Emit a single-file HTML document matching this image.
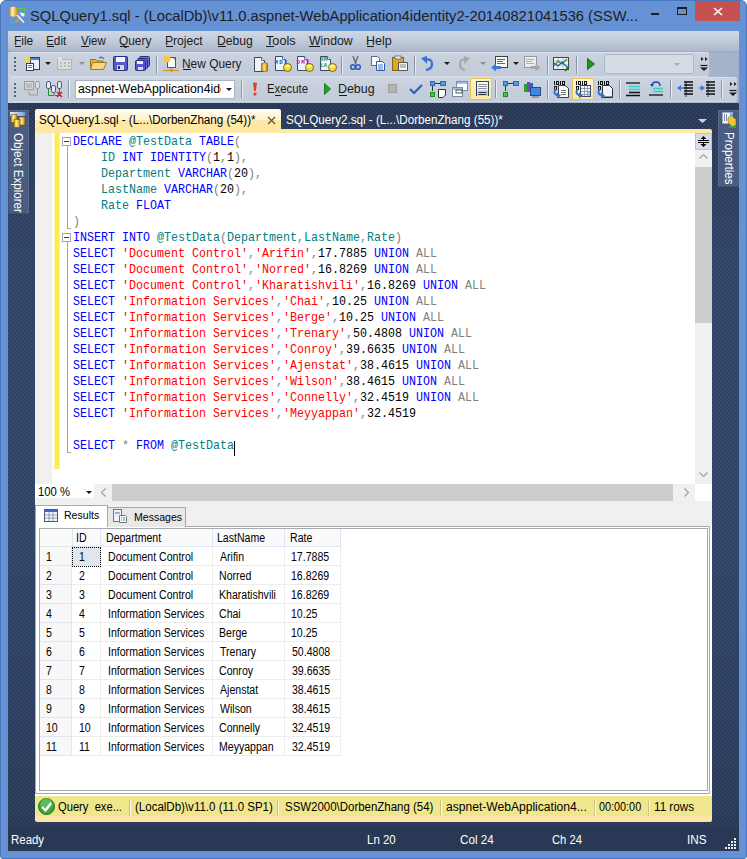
<!DOCTYPE html><html><head><meta charset="utf-8"><style>
*{margin:0;padding:0;box-sizing:border-box}
html,body{width:747px;height:859px;overflow:hidden;background:#fff}
body{position:relative;font-family:"Liberation Sans",sans-serif;font-size:12px;color:#000}
.a{position:absolute}
.t{position:absolute;white-space:pre;line-height:1;transform-origin:0 0}
svg{position:absolute;overflow:visible}
#frame{left:0;top:0;width:747px;height:859px;background:#6591d5;border-radius:6px 6px 3px 3px;border:1px solid #4a76bd}
.dots{background-color:#33476a;
 background-image:conic-gradient(from 270deg at 1px 1px,#24324c 90deg,transparent 0),conic-gradient(from 270deg at 1px 1px,#24324c 90deg,transparent 0),
 conic-gradient(from 270deg at 1px 1px,#3c5073 90deg,transparent 0),conic-gradient(from 270deg at 1px 1px,#3c5073 90deg,transparent 0),
 linear-gradient(#283753 0px,#2c3d5c 30px,#33476a 150px,#34496b 420px,#2f4263 600px,#2a3a58 724px);
 background-size:4px 4px,4px 4px,4px 4px,4px 4px,100% 100%;background-position:0 0,2px 2px,2px 0,0 2px,0 0}
.tb{position:absolute;border-radius:3px;background:linear-gradient(#ccd4e1,#c6cedc 50%,#c3ccda);box-shadow:inset 0 1px #d9e0ea,0 1px #d3dae6}
.grip{position:absolute;width:2px;height:2px;background:#56637a;box-shadow:0 4px #56637a,0 8px #56637a,0 12px #56637a}
.sep{position:absolute;width:1px;background:#8a95a8;box-shadow:1px 0 #e9edf3}
.code{font-family:"Liberation Mono",monospace;font-size:13px;line-height:16px;white-space:pre;position:absolute;left:73px;color:#000;transform:scaleX(0.89734);transform-origin:0 0}
.k{color:#0000ff}.s{color:#ff0000}.i{color:#008080}.g{color:#808080}
</style></head><body>
<div id="frame" class="a"></div>
<svg style="left:6px;top:4px" width="24" height="24" viewBox="0 0 24 24"><defs><linearGradient id="gdb" x1="0" x2="1"><stop offset="0" stop-color="#e0a92a"/><stop offset="0.35" stop-color="#fff0b0"/><stop offset="1" stop-color="#d89510"/></linearGradient></defs><g fill="#4fd64f"><rect x="12" y="4" width="1.2" height="1.2"/><rect x="14" y="4" width="1.2" height="1.2"/><rect x="16" y="4" width="1.2" height="1.2"/><rect x="18" y="4" width="1.2" height="1.2"/><rect x="18" y="6" width="1.2" height="1.2"/><rect x="18" y="8" width="1.2" height="1.2"/><rect x="5" y="14" width="1.2" height="1.2"/><rect x="5" y="16" width="1.2" height="1.2"/><rect x="5" y="18" width="1.2" height="1.2"/><rect x="7" y="18" width="1.2" height="1.2"/></g><path d="M4 3.5Q7.5 2 11 3.5V12Q7.5 13.5 4 12Z" fill="url(#gdb)"/><path d="M9.5 18.5L15 13" stroke="#e3a11c" stroke-width="1.6"/><path d="M11 11L18 18.5" stroke="#f2f4f8" stroke-width="1.5"/><path d="M13 9Q16 7.5 19 10.5L17.5 13Z" fill="#dfe3ea"/><circle cx="16.5" cy="10.5" r="1.5" fill="#fff"/></svg>
<div class="t" style="left:30.28px;top:7.85px;font-size:15.3px;color:#1e1e1e;transform:scaleX(0.9619);">SQLQuery1.sql - (LocalDb)\v11.0.aspnet-WebApplication4identity2-20140821041536 (SSW...</div>
<div class="a" style="left:651px;top:13px;width:8px;height:2px;background:#1e1e1e"></div>
<div class="a" style="left:677px;top:7px;width:10px;height:8px;border:1px solid #1e1e1e;border-top-width:2px"></div>
<div class="a" style="left:695px;top:1px;width:45px;height:20px;background:#c75050"></div>
<svg style="left:713px;top:7px" width="10" height="9" viewBox="0 0 10 9"><path d="M1 1L9 8M9 1L1 8" stroke="#fff" stroke-width="1.6"/></svg>
<div class="a" style="left:8px;top:31px;width:731px;height:72px;background:linear-gradient(90deg,#c8d0de,#b4c0d3 60%,#a3b2ca)"></div>
<div class="a" style="left:8px;top:31px;width:731px;height:21px;background:linear-gradient(#d1d8e5,#bfc9d9 50%,#adb9cc 95%,#9eabc1 95%)"></div>
<div class="t" style="left:14.23px;top:34.59px;font-size:12.3px;color:#1b1b1b;transform:scaleX(0.9699);">File</div>
<div class="a" style="left:15px;top:46px;width:6px;height:1px;background:#1b1b1b"></div>
<div class="t" style="left:46.34px;top:34.59px;font-size:12.3px;color:#1b1b1b;transform:scaleX(0.9590);">Edit</div>
<div class="a" style="left:47px;top:46px;width:7px;height:1px;background:#1b1b1b"></div>
<div class="t" style="left:80.88px;top:34.59px;font-size:12.3px;color:#1b1b1b;transform:scaleX(0.9333);">View</div>
<div class="a" style="left:81px;top:46px;width:8px;height:1px;background:#1b1b1b"></div>
<div class="t" style="left:119.40px;top:34.59px;font-size:12.3px;color:#1b1b1b;transform:scaleX(0.9673);">Query</div>
<div class="a" style="left:120px;top:46px;width:9px;height:1px;background:#1b1b1b"></div>
<div class="t" style="left:165.31px;top:34.59px;font-size:12.3px;color:#1b1b1b;transform:scaleX(0.9852);">Project</div>
<div class="a" style="left:166px;top:46px;width:7px;height:1px;background:#1b1b1b"></div>
<div class="t" style="left:216.51px;top:34.59px;font-size:12.3px;color:#1b1b1b;transform:scaleX(0.9891);">Debug</div>
<div class="a" style="left:218px;top:46px;width:8px;height:1px;background:#1b1b1b"></div>
<div class="t" style="left:265.94px;top:34.59px;font-size:12.3px;color:#1b1b1b;transform:scaleX(1.0321);">Tools</div>
<div class="a" style="left:266px;top:46px;width:8px;height:1px;background:#1b1b1b"></div>
<div class="t" style="left:309.00px;top:34.59px;font-size:12.3px;color:#1b1b1b;">Window</div>
<div class="a" style="left:309px;top:46px;width:11px;height:1px;background:#1b1b1b"></div>
<div class="t" style="left:366.39px;top:34.59px;font-size:12.3px;color:#1b1b1b;transform:scaleX(1.0147);">Help</div>
<div class="a" style="left:367px;top:46px;width:7px;height:1px;background:#1b1b1b"></div>
<div class="tb" style="left:10px;top:52px;width:699px;height:24px"></div>
<div class="tb" style="left:10px;top:77px;width:727px;height:24px"></div>
<div class="grip" style="left:14px;top:57px"></div>
<div class="grip" style="left:14px;top:83px"></div>
<svg style="left:24px;top:56px" width="16" height="16" viewBox="0 0 16 16"><rect x="6.5" y="1.5" width="9" height="12" fill="#e9eef8" stroke="#2a3f6a"/><rect x="7" y="2" width="8" height="2" fill="#4a86d8"/><rect x="2.5" y="7.5" width="7" height="7" fill="#fff" stroke="#2a3f6a"/><path d="M4 9.5h4M4 11.5h4" stroke="#3b73c9"/><circle cx="3.5" cy="3.5" r="3" fill="#f5d547"/></svg>
<svg style="left:45px;top:62px" width="6" height="4" viewBox="0 0 6 4"><path d="M0 0H6L3 3Z" fill="#1b1b1b"/></svg>
<svg style="left:57px;top:57px" width="16" height="14" viewBox="0 0 16 14"><rect x="0.5" y="2.5" width="14" height="10" fill="#dcdcdc" stroke="#b5b5b5"/><path d="M3 6h2M7 6h2M11 6h2M3 9h2M7 9h2M11 9h2" stroke="#9a9a9a"/><circle cx="3" cy="2" r="2" fill="#e6e6e6"/></svg>
<svg style="left:79px;top:62px" width="6" height="4" viewBox="0 0 6 4"><path d="M0 0H6L3 3Z" fill="#8d8d8d"/></svg>
<svg style="left:90px;top:56px" width="17" height="15" viewBox="0 0 17 15"><path d="M0.5 3.5h5l1.5 1.5h6v8h-12.5z" fill="#e2b441" stroke="#9c7416"/><path d="M2.5 6.5h14l-3 7h-13z" fill="#f6d77a" stroke="#a47c1c"/><path d="M9 2Q12 0 14 3" stroke="#3a78c8" fill="none" stroke-width="1.3"/></svg>
<svg style="left:113px;top:56px" width="15" height="15" viewBox="0 0 15 15"><rect x="0.5" y="0.5" width="14" height="14" rx="1" fill="#5659c9" stroke="#2c2f86"/><rect x="3" y="1" width="9" height="5" fill="#f2f4ff"/><rect x="4" y="9" width="7" height="5" fill="#d8dbe6"/><rect x="5" y="10" width="2" height="3" fill="#333"/></svg>
<svg style="left:135px;top:56px" width="15" height="15" viewBox="0 0 15 15"><rect x="4.5" y="0.5" width="10" height="10" rx="1" fill="#6b6fd0" stroke="#2c2f86"/><rect x="2.5" y="2.5" width="10" height="10" rx="1" fill="#6164cc" stroke="#2c2f86"/><rect x="0.5" y="4.5" width="10" height="10" rx="1" fill="#5659c9" stroke="#2c2f86"/><rect x="2" y="5" width="6" height="3" fill="#eef"/><rect x="3" y="11" width="5" height="3" fill="#d8dbe6"/></svg>
<div class="sep" style="left:156px;top:56px;height:18px"></div>
<svg style="left:162px;top:55px" width="18" height="18" viewBox="0 0 18 18"><rect x="5.5" y="2.5" width="8" height="10" fill="#fff" stroke="#555"/><path d="M11 2.5l2.5 2.5" stroke="#555"/><circle cx="5" cy="4" r="3.5" fill="#f7c93a"/><path d="M1 15.5h16" stroke="#d69c1a" stroke-width="1.2"/><path d="M9.5 12.5v3" stroke="#d69c1a" stroke-width="1.2"/><circle cx="9.5" cy="15.5" r="1.2" fill="#c88a10"/></svg>
<div class="t" style="left:182.33px;top:57.59px;font-size:12.3px;color:#1b1b1b;transform:scaleX(0.9686);">New Query</div>
<div class="a" style="left:183px;top:69px;width:8px;height:1px;background:#1b1b1b"></div>
<svg style="left:254px;top:57px" width="15" height="16" viewBox="0 0 15 16"><path d="M0.5 0.5h7l3 3v11h-10z" fill="#eef2fa" stroke="#3c4a66"/><path d="M7.5 0.5v3h3" fill="#fff" stroke="#3c4a66" stroke-width="0.8"/><defs><linearGradient id="gcy" x1="0" x2="1"><stop offset="0" stop-color="#c88a10"/><stop offset="0.45" stop-color="#ffe27a"/><stop offset="1" stop-color="#c07a08"/></linearGradient></defs><path d="M7.5 6.5Q10.5 5 13.5 6.5V14Q10.5 15.5 7.5 14Z" fill="url(#gcy)" stroke="#6a5010" stroke-width="0.6"/></svg>
<svg style="left:275px;top:56px" width="17" height="16" viewBox="0 0 17 16"><path d="M0.5 0.5h7l3 3v11h-10z" fill="#eef2fa" stroke="#3c4a66"/><path d="M7.5 0.5v3h3" fill="#fff" stroke="#3c4a66" stroke-width="0.8"/><text x="-0.5" y="8" font-family="Liberation Mono" font-size="5.8" font-weight="bold" fill="#2060c0" textLength="13">MDX</text><circle cx="12.5" cy="11.5" r="4" fill="#f7dc2a" stroke="#4a3a08" stroke-width="0.7"/><ellipse cx="12.5" cy="10" rx="3" ry="1.2" fill="#fff39a"/></svg>
<svg style="left:297px;top:56px" width="17" height="16" viewBox="0 0 17 16"><path d="M0.5 0.5h7l3 3v11h-10z" fill="#eef2fa" stroke="#3c4a66"/><path d="M7.5 0.5v3h3" fill="#fff" stroke="#3c4a66" stroke-width="0.8"/><text x="-0.5" y="8" font-family="Liberation Mono" font-size="5.8" font-weight="bold" fill="#c020b0" textLength="13">DMX</text><circle cx="12.5" cy="11.5" r="4" fill="#f7dc2a" stroke="#4a3a08" stroke-width="0.7"/><ellipse cx="12.5" cy="10" rx="3" ry="1.2" fill="#fff39a"/></svg>
<svg style="left:320px;top:56px" width="17" height="16" viewBox="0 0 17 16"><path d="M0.5 0.5h7l3 3v11h-10z" fill="#eef2fa" stroke="#3c4a66"/><path d="M7.5 0.5v3h3" fill="#fff" stroke="#3c4a66" stroke-width="0.8"/><g fill="#20a050" font-family="Liberation Mono" font-size="5.6" font-weight="bold"><text x="0.5" y="5">XM</text><text x="0.5" y="11">LA</text></g><circle cx="12.5" cy="11.5" r="4" fill="#f7dc2a" stroke="#4a3a08" stroke-width="0.7"/><ellipse cx="12.5" cy="10" rx="3" ry="1.2" fill="#fff39a"/></svg>
<div class="sep" style="left:341px;top:56px;height:18px"></div>
<svg style="left:350px;top:55px" width="11" height="17" viewBox="0 0 11 17"><path d="M3 1L6 9M8 1L5 9" stroke="#6b6b6b" stroke-width="1.4"/><circle cx="3" cy="12" r="2.3" fill="none" stroke="#2c5fb8" stroke-width="1.6"/><circle cx="8" cy="12" r="2.3" fill="none" stroke="#2c5fb8" stroke-width="1.6"/></svg>
<svg style="left:371px;top:56px" width="15" height="15" viewBox="0 0 15 15"><path d="M0.5 0.5h6l2 2v7h-8z" fill="#fff" stroke="#4c6ea8"/><path d="M5.5 5.5h6l2 2v7h-8z" fill="#fff" stroke="#2f5aa8"/><path d="M7 9h5M7 11h5M7 13h5" stroke="#3f78d0"/></svg>
<svg style="left:392px;top:55px" width="17" height="17" viewBox="0 0 17 17"><rect x="0.5" y="2.5" width="11" height="13" fill="#e0a92c" stroke="#8b6310"/><rect x="3" y="1" width="6" height="3" fill="#f0f0f0" stroke="#666" stroke-width="0.8"/><path d="M6.5 7.5h9v8h-9z" fill="#f4f4f4" stroke="#555"/><path d="M8 10h6M8 12h6" stroke="#888"/></svg>
<div class="sep" style="left:414px;top:56px;height:18px"></div>
<svg style="left:421px;top:56px" width="14" height="15" viewBox="0 0 14 15"><path d="M4 4Q11 2 11 8Q11 13 5 14" fill="none" stroke="#3c74d2" stroke-width="2.4"/><path d="M0 2L6 0L6 8Z" fill="#3c74d2"/></svg>
<svg style="left:444px;top:62px" width="6" height="4" viewBox="0 0 6 4"><path d="M0 0H6L3 3Z" fill="#1b1b1b"/></svg>
<svg style="left:457px;top:56px" width="13" height="15" viewBox="0 0 13 15"><path d="M10 4Q3 2 3 8Q3 13 8 14" fill="none" stroke="#a8a8a8" stroke-width="2.2"/><path d="M13 2L7 0L7 8Z" fill="#a8a8a8"/></svg>
<svg style="left:480px;top:62px" width="6" height="4" viewBox="0 0 6 4"><path d="M0 0H6L3 3Z" fill="#8d8d8d"/></svg>
<svg style="left:491px;top:56px" width="17" height="15" viewBox="0 0 17 15"><rect x="4.5" y="0.5" width="12" height="11" fill="#fbfbfb" stroke="#444"/><path d="M6 3.5h8M6 5.5h6M6 7.5h8" stroke="#2f6cd0"/><path d="M0 11.5L5 7.5V10H10V13H5V15.5Z" fill="#3b7ad8"/></svg>
<svg style="left:513px;top:62px" width="6" height="4" viewBox="0 0 6 4"><path d="M0 0H6L3 3Z" fill="#1b1b1b"/></svg>
<svg style="left:524px;top:56px" width="17" height="15" viewBox="0 0 17 15"><rect x="0.5" y="0.5" width="12" height="11" fill="#ececec" stroke="#9a9a9a"/><path d="M2 3.5h8M2 5.5h6M2 7.5h8" stroke="#b0b0b0"/><path d="M16.5 11.5L11.5 7.5V10H6.5V13H11.5V15.5Z" fill="#a8a8a8"/></svg>
<div class="sep" style="left:547px;top:56px;height:18px"></div>
<svg style="left:553px;top:56px" width="17" height="16" viewBox="0 0 17 16"><rect x="0.5" y="1.5" width="15" height="12" fill="#f5f5f5" stroke="#444"/><path d="M1 5H15M1 9H15M5 2V13M10 2V13" stroke="#8aa" stroke-width="0.6"/><path d="M1 10L5 5L9 8L14 3" stroke="#2a8a2a" stroke-width="1.2" fill="none"/><path d="M1 7L5 10L9 6L14 11" stroke="#2a5ac0" stroke-width="1.2" fill="none"/><path d="M12 15L16 10" stroke="#1b7a1b" stroke-width="2"/></svg>
<div class="sep" style="left:576px;top:56px;height:18px"></div>
<svg style="left:587px;top:58px" width="8" height="12" viewBox="0 0 8 12"><path d="M0.5 0.5L7.5 6L0.5 11.5Z" fill="#1f9a1f" stroke="#157015"/></svg>
<div class="a" style="left:604px;top:54px;width:90px;height:20px;background:#d5dce6;border:1px solid #aeb8c8;border-radius:2px"></div>
<svg style="left:674px;top:63px" width="6" height="4" viewBox="0 0 6 4"><path d="M0 0H6L3 3Z" fill="#a6adb9"/></svg>
<svg style="left:700px;top:56px" width="9" height="17" viewBox="0 0 9 17"><path d="M1 1L3.5 3L1 5ZM5 1L7.5 3L5 5Z" fill="#1b1b1b"/><path d="M0.5 9.5H7.5" stroke="#1b1b1b" stroke-width="1.2"/><path d="M0 11.5H8L4 15Z" fill="#1b1b1b"/></svg>
<svg style="left:24px;top:81px" width="17" height="16" viewBox="0 0 17 16"><rect x="0.5" y="0.5" width="9" height="8" fill="#d8d8d8" stroke="#9c9c9c"/><rect x="2" y="2" width="6" height="5" fill="#bdbdbd"/><rect x="0" y="9" width="11" height="2" fill="#c8c8c8"/><rect x="11.5" y="0.5" width="4" height="7" rx="1.5" fill="#e0e0e0" stroke="#a0a0a0"/><path d="M5 11V14H13.5V8" stroke="#999" fill="none"/></svg>
<svg style="left:46px;top:81px" width="17" height="16" viewBox="0 0 17 16"><rect x="0.5" y="0.5" width="4" height="7" rx="1.5" fill="#e9eef6" stroke="#4e5c74"/><rect x="5.5" y="4.5" width="4" height="7" rx="1.5" fill="#e9eef6" stroke="#4e5c74"/><rect x="11.5" y="0.5" width="4" height="7" rx="1.5" fill="#e9eef6" stroke="#4e5c74"/><path d="M2.5 8V14.5H8V12" stroke="#1d9a1d" fill="none"/><path d="M9 14.5H12M13.5 8V15" stroke="#e21a1a"/><path d="M11 11L16 16M16 11L11 16" stroke="#e21a1a" stroke-width="1.5"/></svg>
<div class="sep" style="left:68px;top:80px;height:18px"></div>
<div class="a" style="left:75px;top:80px;width:160px;height:19px;background:#fff;border:1px solid #a9b3c3"></div>
<div class="a" style="left:76px;top:81px;width:146px;height:17px;overflow:hidden">
<div class="t" style="left:2.01px;top:1.92px;font-size:12.5px;color:#000;transform:scaleX(0.9792);">aspnet-WebApplication4identity2</div>
</div>
<div class="a" style="left:221px;top:81px;width:13px;height:17px;background:#fff"></div>
<svg style="left:226px;top:88px" width="6" height="4" viewBox="0 0 6 4"><path d="M0 0H6L3 3Z" fill="#1b1b1b"/></svg>
<div class="sep" style="left:241px;top:80px;height:18px"></div>
<svg style="left:252px;top:82px" width="6" height="14" viewBox="0 0 6 14"><path d="M1 1Q3 0 5 1L3.8 9H2.2Z" fill="#e2401c"/><circle cx="3" cy="12" r="1.6" fill="#e2401c"/></svg>
<div class="t" style="left:267.48px;top:82.59px;font-size:12.3px;color:#1b1b1b;transform:scaleX(0.9213);">Execute</div>
<div class="a" style="left:275px;top:95px;width:6px;height:1px;background:#1b1b1b"></div>
<svg style="left:324px;top:83px" width="7" height="12" viewBox="0 0 7 12"><path d="M0.5 0.5L6.5 6L0.5 11.5Z" fill="#23a023" stroke="#178017"/></svg>
<div class="t" style="left:337.99px;top:82.59px;font-size:12.3px;color:#1b1b1b;transform:scaleX(1.0095);">Debug</div>
<div class="a" style="left:339px;top:95px;width:8px;height:1px;background:#1b1b1b"></div>
<svg style="left:388px;top:84px" width="9" height="9" viewBox="0 0 9 9"><rect x="0" y="0" width="9" height="9" fill="#9e9e9e"/><rect x="1" y="1" width="7" height="7" fill="#b4b4b4"/></svg>
<svg style="left:409px;top:84px" width="14" height="10" viewBox="0 0 14 10"><path d="M1 5L5 9L13 1" stroke="#2a62c8" stroke-width="2.2" fill="none"/></svg>
<svg style="left:430px;top:81px" width="16" height="17" viewBox="0 0 16 17"><rect x="0.5" y="0.5" width="4" height="4" fill="#4aa0e8" stroke="#2a6ab0"/><rect x="10.5" y="0.5" width="5" height="4" fill="#4aa0e8" stroke="#2a6ab0"/><path d="M5 2.5H10" stroke="#333"/><path d="M2.5 5V10" stroke="#333"/><rect x="0.5" y="11.5" width="4" height="4" fill="#3ad13a" stroke="#1a8a1a"/><path d="M8.5 8.5H15.5V14L13 16.5H8.5Z" fill="#fff" stroke="#333"/></svg>
<svg style="left:452px;top:81px" width="16" height="17" viewBox="0 0 16 17"><rect x="4.5" y="0.5" width="11" height="9" fill="#fff" stroke="#7a8aa8"/><rect x="5" y="1" width="10" height="2" fill="#9ec0e8"/><rect x="0.5" y="6.5" width="10" height="9" fill="#fff" stroke="#7a8aa8"/><rect x="1" y="7" width="9" height="2" fill="#9ec0e8"/><rect x="4" y="9" width="6" height="3" fill="#fff" stroke="#333" stroke-width="0.8"/></svg>
<div class="a" style="left:470px;top:78px;width:22px;height:22px;background:linear-gradient(#fef6cf,#fde7a3);border:1px solid #e5c365"></div>
<svg style="left:476px;top:81px" width="16" height="16" viewBox="0 0 16 16"><rect x="0.5" y="0.5" width="12" height="14" fill="#fafbfd" stroke="#3a4050"/><path d="M2 3.5h9M2 5.5h9M2 7.5h9" stroke="#8a92a0"/><rect x="1" y="9" width="11" height="6" fill="#c8d2e2"/><path d="M2.5 11.5h8M2.5 13.5h8" stroke="#2a3040"/></svg>
<div class="sep" style="left:495px;top:80px;height:18px"></div>
<svg style="left:503px;top:81px" width="16" height="16" viewBox="0 0 16 16"><rect x="0.5" y="0.5" width="4" height="4" fill="#4aa0e8" stroke="#2a6ab0"/><rect x="10.5" y="0.5" width="5" height="4" fill="#4aa0e8" stroke="#2a6ab0"/><path d="M5 2.5H10" stroke="#333"/><path d="M2.5 5V10" stroke="#333"/><rect x="0.5" y="11.5" width="4" height="4" fill="#3ad13a" stroke="#1a8a1a"/></svg>
<svg style="left:524px;top:81px" width="17" height="17" viewBox="0 0 17 17"><rect x="0" y="3" width="3" height="8" fill="#2f9a3a"/><rect x="3" y="1" width="3" height="10" fill="#7a4ab8"/><rect x="6" y="2" width="3" height="9" fill="#2a6ab8"/><rect x="6.5" y="6.5" width="10" height="8" fill="#3a8ae0" stroke="#2a4a80"/><rect x="8" y="15" width="7" height="2" fill="#999"/></svg>
<div class="sep" style="left:547px;top:80px;height:18px"></div>
<svg style="left:553px;top:81px" width="16" height="17" viewBox="0 0 16 17"><g fill="#111"><rect x="1" y="0" width="1" height="4"/><rect x="3" y="0" width="2" height="1"/><rect x="3" y="3" width="2" height="1"/><rect x="3" y="0" width="1" height="4"/><rect x="5" y="0" width="1" height="4"/><rect x="7" y="0" width="1" height="4"/><rect x="9" y="0" width="2" height="1"/><rect x="9" y="3" width="2" height="1"/><rect x="9" y="0" width="1" height="4"/><rect x="11" y="0" width="1" height="4"/><rect x="1" y="5" width="2" height="1"/><rect x="1" y="8" width="2" height="1"/><rect x="1" y="5" width="1" height="4"/><rect x="3" y="5" width="1" height="4"/></g><path d="M5.5 4.5h7l3 3v9h-10z" fill="#f8f8fa" stroke="#3a4050"/><path d="M8 9.5h5M8 11.5h5M8 13.5h5" stroke="#555" stroke-width="0.8"/><path d="M2.5 8Q-0.5 13 5 14.5" fill="none" stroke="#2f6fd0" stroke-width="2"/><path d="M4 11.5L8 14.5L4 17.5Z" fill="#2f6fd0"/></svg>
<div class="a" style="left:572px;top:78px;width:22px;height:22px;background:linear-gradient(#fef6cf,#fde7a3);border:1px solid #e5c365"></div>
<svg style="left:575px;top:81px" width="16" height="17" viewBox="0 0 16 17"><g fill="#111"><rect x="1" y="0" width="1" height="4"/><rect x="3" y="0" width="2" height="1"/><rect x="3" y="3" width="2" height="1"/><rect x="3" y="0" width="1" height="4"/><rect x="5" y="0" width="1" height="4"/><rect x="7" y="0" width="1" height="4"/><rect x="9" y="0" width="2" height="1"/><rect x="9" y="3" width="2" height="1"/><rect x="9" y="0" width="1" height="4"/><rect x="11" y="0" width="1" height="4"/><rect x="1" y="5" width="2" height="1"/><rect x="1" y="8" width="2" height="1"/><rect x="1" y="5" width="1" height="4"/><rect x="3" y="5" width="1" height="4"/></g><rect x="5.5" y="4.5" width="10" height="11" fill="#f4f8fc" stroke="#3a4a60"/><path d="M6 7.5h9M6 10.5h9M6 13.5h9M9.5 5v10M12.5 5v10" stroke="#7a8aa0" stroke-width="0.8"/><rect x="13" y="11" width="2" height="4" fill="#a8c8e8"/><path d="M2.5 8Q-0.5 13 5 14.5" fill="none" stroke="#2f6fd0" stroke-width="2"/><path d="M4 11.5L8 14.5L4 17.5Z" fill="#2f6fd0"/></svg>
<svg style="left:597px;top:81px" width="16" height="17" viewBox="0 0 16 17"><g fill="#111"><rect x="1" y="0" width="1" height="4"/><rect x="3" y="0" width="2" height="1"/><rect x="3" y="3" width="2" height="1"/><rect x="3" y="0" width="1" height="4"/><rect x="5" y="0" width="1" height="4"/><rect x="7" y="0" width="1" height="4"/><rect x="9" y="0" width="2" height="1"/><rect x="9" y="3" width="2" height="1"/><rect x="9" y="0" width="1" height="4"/><rect x="11" y="0" width="1" height="4"/><rect x="1" y="5" width="2" height="1"/><rect x="1" y="8" width="2" height="1"/><rect x="1" y="5" width="1" height="4"/><rect x="3" y="5" width="1" height="4"/></g><path d="M5.5 4.5h7l3 3v9h-10z" fill="#f0f2f6" stroke="#2a3040"/><path d="M6 16h9" stroke="#2a3040"/><path d="M2.5 8Q-0.5 13 5 14.5" fill="none" stroke="#2f6fd0" stroke-width="2"/><path d="M4 11.5L8 14.5L4 17.5Z" fill="#2f6fd0"/></svg>
<div class="sep" style="left:619px;top:80px;height:18px"></div>
<svg style="left:626px;top:82px" width="15" height="14" viewBox="0 0 15 14"><path d="M0 1h14" stroke="#111" stroke-width="1.3"/><path d="M3 4.5h11M3 7.5h11" stroke="#2ad4d4" stroke-width="1.3"/><path d="M3 10.5h11M0 13.5h14" stroke="#111" stroke-width="1.3"/></svg>
<svg style="left:649px;top:81px" width="14" height="15" viewBox="0 0 14 15"><path d="M3 5Q3 1 7 1Q11 1 11 5" fill="none" stroke="#1a4ab0" stroke-width="1.4"/><path d="M1 3L3 6L5 3Z" fill="#1a4ab0"/><path d="M4 7.5h10M4 10.5h10" stroke="#2ad4d4" stroke-width="1.3"/><path d="M0 14h14" stroke="#111" stroke-width="1.3"/></svg>
<div class="sep" style="left:670px;top:80px;height:18px"></div>
<svg style="left:677px;top:81px" width="17" height="16" viewBox="0 0 17 16"><path d="M7 1h9M7 4h9M7 7h9M7 10h9M7 13h9" stroke="#111" stroke-width="1.3"/><path d="M9 0V16" stroke="#111" stroke-width="0.8"/><path d="M0 7L4 4V10Z" fill="#3a7ad8"/><path d="M3 7h4" stroke="#3a7ad8" stroke-width="1.5"/></svg>
<svg style="left:699px;top:81px" width="17" height="16" viewBox="0 0 17 16"><path d="M7 1h9M7 4h9M7 7h9M7 10h9M7 13h9" stroke="#111" stroke-width="1.3"/><path d="M9 0V16" stroke="#111" stroke-width="0.8"/><path d="M6 7L2 4V10Z" fill="#3a7ad8"/><path d="M0 7h3" stroke="#3a7ad8" stroke-width="1.5"/></svg>
<div class="sep" style="left:721px;top:80px;height:18px"></div>
<svg style="left:729px;top:81px" width="8" height="16" viewBox="0 0 8 16"><path d="M1 1L3.5 3L1 5ZM5 1L7.5 3L5 5Z" fill="#1b1b1b"/><path d="M0.5 9.5H7.5" stroke="#1b1b1b" stroke-width="1.2"/><path d="M0 11.5H8L4 15Z" fill="#1b1b1b"/></svg>
<div class="a dots" style="left:8px;top:103px;width:731px;height:724px"></div>
<div class="a" style="left:8px;top:827px;width:731px;height:24px;background:#293955"></div>
<div class="a" style="left:8px;top:110px;width:21px;height:104px;background:#4a5d80;border:1px solid #56698c;border-left-color:#3f5274;border-bottom-color:#3f5274"></div>
<svg style="left:9px;top:111px" width="18" height="18" viewBox="0 0 18 18"><defs><linearGradient id="gbar" x1="0" x2="1"><stop offset="0" stop-color="#e4ecf8"/><stop offset="0.8" stop-color="#8fb0e8"/><stop offset="1" stop-color="#3f73d8"/></linearGradient><linearGradient id="ggold" x1="0" x2="1"><stop offset="0" stop-color="#d99a10"/><stop offset="0.4" stop-color="#ffe88a"/><stop offset="1" stop-color="#d08a08"/></linearGradient></defs><rect x="1" y="1" width="16" height="4" fill="url(#gbar)"/><rect x="2" y="3.5" width="6" height="8" fill="url(#ggold)" stroke="#5a4a20" stroke-width="0.5"/><rect x="10" y="6" width="6" height="8" fill="url(#ggold)" stroke="#5a4a20" stroke-width="0.5"/><rect x="5" y="8.5" width="6" height="8" fill="url(#ggold)" stroke="#5a4a20" stroke-width="0.5"/></svg>
<div class="t" style="left:23.76px;top:133px;font-size:12px;color:#fff;transform:rotate(90deg) scaleX(0.965);transform-origin:0 0">Object Explorer</div>
<div class="a" style="left:718px;top:110px;width:21px;height:77px;background:#4a5d80;border:1px solid #56698c;border-right:none;border-bottom-color:#3f5274"></div>
<svg style="left:722px;top:112px" width="15" height="17" viewBox="0 0 15 17"><rect x="0.5" y="0.5" width="10" height="11" fill="#f4f8fe" stroke="#9aa8c0" stroke-width="0.6"/><rect x="8" y="0.5" width="3" height="4" fill="#8fb0e8"/><path d="M2.5 2v7M4.5 2v7" stroke="#7a8aa8" stroke-width="1"/><path d="M6 6L9 3L12 6L14 7V13Q12 15 9 14L6 10Z" fill="#f2c43a" stroke="#6a5010" stroke-width="0.5"/><rect x="7" y="14" width="7" height="2" fill="#3aa03a"/></svg>
<div class="t" style="left:735.06px;top:132px;font-size:12px;color:#fff;transform:rotate(90deg) scaleX(0.96);transform-origin:0 0">Properties</div>
<div class="a" style="left:35px;top:109px;width:246px;height:24px;background:linear-gradient(#fffcf4,#fff3cd 46%,#ffe8a6 47%,#ffe8a6);border-radius:2px 2px 0 0"></div>
<div class="t" style="left:38.91px;top:113.59px;font-size:12.3px;color:#000;transform:scaleX(0.9460);">SQLQuery1.sql - (L...\DorbenZhang (54))*</div>
<svg style="left:267px;top:116px" width="9" height="9" viewBox="0 0 9 9"><path d="M1 1L8 8M8 1L1 8" stroke="#6b5a3a" stroke-width="1.4"/></svg>
<div class="t" style="left:286.01px;top:113.59px;font-size:12.3px;color:#fff;transform:scaleX(0.9473);">SQLQuery2.sql - (L...\DorbenZhang (55))*</div>
<svg style="left:698px;top:119px" width="9" height="5" viewBox="0 0 9 5"><path d="M0 0H9L4.5 4Z" fill="#ced4df"/></svg>
<div class="a" style="left:35px;top:129px;width:677px;height:4px;background:#ffe8a6;border-radius:0 2px 0 0"></div>
<div class="a" style="left:35px;top:133px;width:677px;height:351px;background:#fff"></div>
<div class="a" style="left:35px;top:133px;width:17px;height:351px;background:#f0f0f0"></div>
<div class="a" style="left:54px;top:133px;width:6px;height:336px;background:linear-gradient(90deg,#fff2a0 0,#fff2a0 1px,#ffea5a 1px,#ffea5a 5px,#fff2a0 5px)"></div>
<div class="code" style="top:134px"><span class="k">DECLARE</span> <span class="i">@TestData</span> <span class="k">TABLE</span><span class="g">(</span>
    <span class="i">ID</span> <span class="k">INT</span> <span class="k">IDENTITY</span><span class="g">(</span>1<span class="g">,</span>1<span class="g">)</span><span class="g">,</span>
    <span class="i">Department</span> <span class="k">VARCHAR</span><span class="g">(</span>20<span class="g">)</span><span class="g">,</span>
    <span class="i">LastName</span> <span class="k">VARCHAR</span><span class="g">(</span>20<span class="g">)</span><span class="g">,</span>
    <span class="i">Rate</span> <span class="k">FLOAT</span>
<span class="g">)</span>
<span class="k">INSERT</span> <span class="k">INTO</span> <span class="i">@TestData</span><span class="g">(</span><span class="i">Department</span><span class="g">,</span><span class="i">LastName</span><span class="g">,</span><span class="i">Rate</span><span class="g">)</span>
<span class="k">SELECT</span> <span class="s">&#x27;Document Control&#x27;</span><span class="g">,</span><span class="s">&#x27;Arifin&#x27;</span><span class="g">,</span>17.7885 <span class="k">UNION</span> <span class="g">ALL</span>
<span class="k">SELECT</span> <span class="s">&#x27;Document Control&#x27;</span><span class="g">,</span><span class="s">&#x27;Norred&#x27;</span><span class="g">,</span>16.8269 <span class="k">UNION</span> <span class="g">ALL</span>
<span class="k">SELECT</span> <span class="s">&#x27;Document Control&#x27;</span><span class="g">,</span><span class="s">&#x27;Kharatishvili&#x27;</span><span class="g">,</span>16.8269 <span class="k">UNION</span> <span class="g">ALL</span>
<span class="k">SELECT</span> <span class="s">&#x27;Information Services&#x27;</span><span class="g">,</span><span class="s">&#x27;Chai&#x27;</span><span class="g">,</span>10.25 <span class="k">UNION</span> <span class="g">ALL</span>
<span class="k">SELECT</span> <span class="s">&#x27;Information Services&#x27;</span><span class="g">,</span><span class="s">&#x27;Berge&#x27;</span><span class="g">,</span>10.25 <span class="k">UNION</span> <span class="g">ALL</span>
<span class="k">SELECT</span> <span class="s">&#x27;Information Services&#x27;</span><span class="g">,</span><span class="s">&#x27;Trenary&#x27;</span><span class="g">,</span>50.4808 <span class="k">UNION</span> <span class="g">ALL</span>
<span class="k">SELECT</span> <span class="s">&#x27;Information Services&#x27;</span><span class="g">,</span><span class="s">&#x27;Conroy&#x27;</span><span class="g">,</span>39.6635 <span class="k">UNION</span> <span class="g">ALL</span>
<span class="k">SELECT</span> <span class="s">&#x27;Information Services&#x27;</span><span class="g">,</span><span class="s">&#x27;Ajenstat&#x27;</span><span class="g">,</span>38.4615 <span class="k">UNION</span> <span class="g">ALL</span>
<span class="k">SELECT</span> <span class="s">&#x27;Information Services&#x27;</span><span class="g">,</span><span class="s">&#x27;Wilson&#x27;</span><span class="g">,</span>38.4615 <span class="k">UNION</span> <span class="g">ALL</span>
<span class="k">SELECT</span> <span class="s">&#x27;Information Services&#x27;</span><span class="g">,</span><span class="s">&#x27;Connelly&#x27;</span><span class="g">,</span>32.4519 <span class="k">UNION</span> <span class="g">ALL</span>
<span class="k">SELECT</span> <span class="s">&#x27;Information Services&#x27;</span><span class="g">,</span><span class="s">&#x27;Meyyappan&#x27;</span><span class="g">,</span>32.4519

<span class="k">SELECT</span> <span class="g">*</span> <span class="k">FROM</span> <span class="i">@TestData</span></div>
<div class="a" style="left:234px;top:441px;width:1px;height:15px;background:#000"></div>
<div class="a" style="left:62px;top:137px;width:9px;height:9px;border:1px solid #a5a5a5;background:#fff"></div>
<div class="a" style="left:64px;top:141px;width:5px;height:1px;background:#333"></div>
<div class="a" style="left:67px;top:146px;width:1px;height:83px;background:#a5a5a5"></div>
<div class="a" style="left:67px;top:228px;width:4px;height:1px;background:#a5a5a5"></div>
<div class="a" style="left:62px;top:233px;width:9px;height:9px;border:1px solid #a5a5a5;background:#fff"></div>
<div class="a" style="left:64px;top:237px;width:5px;height:1px;background:#333"></div>
<div class="a" style="left:67px;top:242px;width:1px;height:211px;background:#a5a5a5"></div>
<div class="a" style="left:67px;top:452px;width:4px;height:1px;background:#a5a5a5"></div>
<div class="a" style="left:695px;top:133px;width:17px;height:351px;background:#f0f0f0"></div>
<div class="a" style="left:695px;top:133px;width:17px;height:17px;background:#d6dde8;border:1px solid #b9c3d3"></div>
<svg style="left:698px;top:136px" width="11" height="11" viewBox="0 0 11 11"><path d="M0 4.5H11M0 6.5H11" stroke="#000"/><path d="M5.5 0L8.5 3H2.5Z M5.5 11L8.5 8H2.5Z" fill="#000"/><path d="M5.5 2V4M5.5 7V9" stroke="#000"/></svg>
<svg style="left:699px;top:154px" width="9" height="5" viewBox="0 0 9 5"><path d="M0.5 4.5L4.5 0.5L8.5 4.5" stroke="#a0a0a0" fill="none" stroke-width="1.2"/></svg>
<div class="a" style="left:695px;top:167px;width:17px;height:156px;background:#cdcdcd"></div>
<svg style="left:699px;top:472px" width="9" height="5" viewBox="0 0 9 5"><path d="M0.5 0.5L4.5 4.5L8.5 0.5" stroke="#a0a0a0" fill="none" stroke-width="1.2"/></svg>
<div class="a" style="left:35px;top:484px;width:677px;height:17px;background:#f0f0f0"></div>
<div class="a" style="left:35px;top:484px;width:59px;height:14px;background:#fff"></div>
<div class="t" style="left:37.88px;top:486.14px;font-size:12px;color:#000;transform:scaleX(0.9405);">100 %</div>
<svg style="left:86px;top:491px" width="6" height="4" viewBox="0 0 6 4"><path d="M0 0H6L3 3Z" fill="#1b1b1b"/></svg>
<svg style="left:101px;top:488px" width="5" height="9" viewBox="0 0 5 9"><path d="M4.5 0.5L0.5 4.5L4.5 8.5" stroke="#a0a0a0" fill="none" stroke-width="1.2"/></svg>
<div class="a" style="left:112px;top:484px;width:561px;height:17px;background:#cdcdcd"></div>
<svg style="left:684px;top:488px" width="5" height="9" viewBox="0 0 5 9"><path d="M0.5 0.5L4.5 4.5L0.5 8.5" stroke="#a0a0a0" fill="none" stroke-width="1.2"/></svg>
<div class="a" style="left:695px;top:484px;width:17px;height:17px;background:#fff"></div>
<div class="a" style="left:35px;top:501px;width:677px;height:295px;background:#fff"></div>
<div class="a" style="left:35px;top:501px;width:677px;height:25px;background:#f0f0f0"></div>
<div class="a" style="left:35px;top:526px;width:675px;height:268px;border:1px solid #a8a8a8;background:#fff"></div>
<div class="a" style="left:107px;top:507px;width:79px;height:20px;background:#e8e8e8;border:1px solid #a8a8a8;border-bottom:none"></div>
<svg style="left:113px;top:509px" width="14" height="14" viewBox="0 0 14 14"><rect x="0.5" y="0.5" width="8" height="12" fill="#eef2f8" stroke="#6a7890"/><rect x="2" y="3" width="5" height="2" fill="#8ab0e0"/><path d="M6.5 6.5h6l1 1v6h-7z" fill="#fff" stroke="#6a7890"/><path d="M8 9h1M8 11h1" stroke="#e03030"/><path d="M10 9h2M10 11h2" stroke="#30a030"/></svg>
<div class="t" style="left:133.61px;top:511.81px;font-size:11.8px;color:#000;transform:scaleX(0.8936);">Messages</div>
<div class="a" style="left:35px;top:505px;width:73px;height:22px;background:#fff;border:1px solid #a8a8a8;border-bottom:none"></div>
<svg style="left:44px;top:509px" width="14" height="13" viewBox="0 0 14 13"><rect x="0.5" y="0.5" width="13" height="12" fill="#f4f6fb" stroke="#4a5a78"/><rect x="1" y="1" width="12" height="2" fill="#3a6ad0"/><path d="M1 6H13M1 9H13M5 3V12M9 3V12" stroke="#7a8ab0" stroke-width="0.8"/></svg>
<div class="t" style="left:64.31px;top:509.51px;font-size:11.8px;color:#000;transform:scaleX(0.8947);">Results</div>
<div class="a" style="left:39px;top:528px;width:669px;height:263px;border:1px solid #a5a9b2;background:#fff"></div>
<div class="a" style="left:40px;top:529px;width:300px;height:18px;background:#fafafa"></div>
<div class="a" style="left:40px;top:547px;width:32px;height:209px;background:#f8f8f8"></div>
<div class="a" style="left:100px;top:547px;width:1px;height:209px;background:#ececec"></div>
<div class="a" style="left:212px;top:547px;width:1px;height:209px;background:#ececec"></div>
<div class="a" style="left:284px;top:547px;width:1px;height:209px;background:#ececec"></div>
<div class="a" style="left:340px;top:547px;width:1px;height:209px;background:#ececec"></div>
<div class="a" style="left:72px;top:529px;width:1px;height:18px;background:#dde7f4"></div>
<div class="a" style="left:100px;top:529px;width:1px;height:18px;background:#dde7f4"></div>
<div class="a" style="left:212px;top:529px;width:1px;height:18px;background:#dde7f4"></div>
<div class="a" style="left:284px;top:529px;width:1px;height:18px;background:#dde7f4"></div>
<div class="a" style="left:340px;top:529px;width:1px;height:18px;background:#dde7f4"></div>
<div class="a" style="left:71px;top:547px;width:1px;height:209px;background:#dde7f4"></div>
<div class="a" style="left:40px;top:546px;width:300px;height:1px;background:#dde7f4"></div>
<div class="a" style="left:72px;top:565px;width:268px;height:1px;background:#ececec"></div>
<div class="a" style="left:40px;top:565px;width:32px;height:1px;background:#dde7f4"></div>
<div class="a" style="left:72px;top:584px;width:268px;height:1px;background:#ececec"></div>
<div class="a" style="left:40px;top:584px;width:32px;height:1px;background:#dde7f4"></div>
<div class="a" style="left:72px;top:603px;width:268px;height:1px;background:#ececec"></div>
<div class="a" style="left:40px;top:603px;width:32px;height:1px;background:#dde7f4"></div>
<div class="a" style="left:72px;top:622px;width:268px;height:1px;background:#ececec"></div>
<div class="a" style="left:40px;top:622px;width:32px;height:1px;background:#dde7f4"></div>
<div class="a" style="left:72px;top:641px;width:268px;height:1px;background:#ececec"></div>
<div class="a" style="left:40px;top:641px;width:32px;height:1px;background:#dde7f4"></div>
<div class="a" style="left:72px;top:660px;width:268px;height:1px;background:#ececec"></div>
<div class="a" style="left:40px;top:660px;width:32px;height:1px;background:#dde7f4"></div>
<div class="a" style="left:72px;top:679px;width:268px;height:1px;background:#ececec"></div>
<div class="a" style="left:40px;top:679px;width:32px;height:1px;background:#dde7f4"></div>
<div class="a" style="left:72px;top:698px;width:268px;height:1px;background:#ececec"></div>
<div class="a" style="left:40px;top:698px;width:32px;height:1px;background:#dde7f4"></div>
<div class="a" style="left:72px;top:717px;width:268px;height:1px;background:#ececec"></div>
<div class="a" style="left:40px;top:717px;width:32px;height:1px;background:#dde7f4"></div>
<div class="a" style="left:72px;top:736px;width:268px;height:1px;background:#ececec"></div>
<div class="a" style="left:40px;top:736px;width:32px;height:1px;background:#dde7f4"></div>
<div class="a" style="left:72px;top:755px;width:268px;height:1px;background:#ececec"></div>
<div class="a" style="left:40px;top:755px;width:32px;height:1px;background:#dde7f4"></div>
<div class="t" style="left:76.21px;top:531.94px;font-size:12px;color:#000;transform:scaleX(0.8800);">ID</div>
<div class="t" style="left:105.52px;top:531.94px;font-size:12px;color:#000;transform:scaleX(0.8800);">Department</div>
<div class="t" style="left:217.22px;top:531.94px;font-size:12px;color:#000;transform:scaleX(0.8800);">LastName</div>
<div class="t" style="left:289.52px;top:531.94px;font-size:12px;color:#000;transform:scaleX(0.8800);">Rate</div>
<div class="a" style="left:72px;top:547px;width:29px;height:19px;background:#dfe6ee"></div>
<div class="a" style="left:72px;top:547px;width:29px;height:20px;border:1px dotted #000"></div>
<div class="t" style="left:45.93px;top:550.74px;font-size:12px;color:#000;transform:scaleX(0.8800);">1</div>
<div class="t" style="left:78.73px;top:550.74px;font-size:12px;color:#000;transform:scaleX(0.8800);">1</div>
<div class="t" style="left:107.62px;top:550.74px;font-size:12px;color:#000;transform:scaleX(0.8800);">Document Control</div>
<div class="t" style="left:220.00px;top:550.74px;font-size:12px;color:#000;transform:scaleX(0.8800);">Arifin</div>
<div class="t" style="left:291.43px;top:550.74px;font-size:12px;color:#000;transform:scaleX(0.8800);">17.7885</div>
<div class="t" style="left:46.15px;top:569.74px;font-size:12px;color:#000;transform:scaleX(0.8800);">2</div>
<div class="t" style="left:78.95px;top:569.74px;font-size:12px;color:#000;transform:scaleX(0.8800);">2</div>
<div class="t" style="left:107.62px;top:569.74px;font-size:12px;color:#000;transform:scaleX(0.8800);">Document Control</div>
<div class="t" style="left:219.12px;top:569.74px;font-size:12px;color:#000;transform:scaleX(0.8800);">Norred</div>
<div class="t" style="left:291.43px;top:569.74px;font-size:12px;color:#000;transform:scaleX(0.8800);">16.8269</div>
<div class="t" style="left:46.26px;top:588.74px;font-size:12px;color:#000;transform:scaleX(0.8800);">3</div>
<div class="t" style="left:79.06px;top:588.74px;font-size:12px;color:#000;transform:scaleX(0.8800);">3</div>
<div class="t" style="left:107.62px;top:588.74px;font-size:12px;color:#000;transform:scaleX(0.8800);">Document Control</div>
<div class="t" style="left:219.12px;top:588.74px;font-size:12px;color:#000;transform:scaleX(0.8800);">Kharatishvili</div>
<div class="t" style="left:291.43px;top:588.74px;font-size:12px;color:#000;transform:scaleX(0.8800);">16.8269</div>
<div class="t" style="left:46.48px;top:607.74px;font-size:12px;color:#000;transform:scaleX(0.8800);">4</div>
<div class="t" style="left:79.28px;top:607.74px;font-size:12px;color:#000;transform:scaleX(0.8800);">4</div>
<div class="t" style="left:107.51px;top:607.74px;font-size:12px;color:#000;transform:scaleX(0.8800);">Information Services</div>
<div class="t" style="left:219.45px;top:607.74px;font-size:12px;color:#000;transform:scaleX(0.8800);">Chai</div>
<div class="t" style="left:291.43px;top:607.74px;font-size:12px;color:#000;transform:scaleX(0.8800);">10.25</div>
<div class="t" style="left:46.26px;top:626.74px;font-size:12px;color:#000;transform:scaleX(0.8800);">5</div>
<div class="t" style="left:79.06px;top:626.74px;font-size:12px;color:#000;transform:scaleX(0.8800);">5</div>
<div class="t" style="left:107.51px;top:626.74px;font-size:12px;color:#000;transform:scaleX(0.8800);">Information Services</div>
<div class="t" style="left:219.12px;top:626.74px;font-size:12px;color:#000;transform:scaleX(0.8800);">Berge</div>
<div class="t" style="left:291.43px;top:626.74px;font-size:12px;color:#000;transform:scaleX(0.8800);">10.25</div>
<div class="t" style="left:46.15px;top:645.74px;font-size:12px;color:#000;transform:scaleX(0.8800);">6</div>
<div class="t" style="left:78.95px;top:645.74px;font-size:12px;color:#000;transform:scaleX(0.8800);">6</div>
<div class="t" style="left:107.51px;top:645.74px;font-size:12px;color:#000;transform:scaleX(0.8800);">Information Services</div>
<div class="t" style="left:219.78px;top:645.74px;font-size:12px;color:#000;transform:scaleX(0.8800);">Trenary</div>
<div class="t" style="left:291.76px;top:645.74px;font-size:12px;color:#000;transform:scaleX(0.8800);">50.4808</div>
<div class="t" style="left:46.15px;top:664.74px;font-size:12px;color:#000;transform:scaleX(0.8800);">7</div>
<div class="t" style="left:78.95px;top:664.74px;font-size:12px;color:#000;transform:scaleX(0.8800);">7</div>
<div class="t" style="left:107.51px;top:664.74px;font-size:12px;color:#000;transform:scaleX(0.8800);">Information Services</div>
<div class="t" style="left:219.45px;top:664.74px;font-size:12px;color:#000;transform:scaleX(0.8800);">Conroy</div>
<div class="t" style="left:291.76px;top:664.74px;font-size:12px;color:#000;transform:scaleX(0.8800);">39.6635</div>
<div class="t" style="left:46.26px;top:683.74px;font-size:12px;color:#000;transform:scaleX(0.8800);">8</div>
<div class="t" style="left:79.06px;top:683.74px;font-size:12px;color:#000;transform:scaleX(0.8800);">8</div>
<div class="t" style="left:107.51px;top:683.74px;font-size:12px;color:#000;transform:scaleX(0.8800);">Information Services</div>
<div class="t" style="left:220.00px;top:683.74px;font-size:12px;color:#000;transform:scaleX(0.8800);">Ajenstat</div>
<div class="t" style="left:291.76px;top:683.74px;font-size:12px;color:#000;transform:scaleX(0.8800);">38.4615</div>
<div class="t" style="left:46.26px;top:702.74px;font-size:12px;color:#000;transform:scaleX(0.8800);">9</div>
<div class="t" style="left:79.06px;top:702.74px;font-size:12px;color:#000;transform:scaleX(0.8800);">9</div>
<div class="t" style="left:107.51px;top:702.74px;font-size:12px;color:#000;transform:scaleX(0.8800);">Information Services</div>
<div class="t" style="left:220.00px;top:702.74px;font-size:12px;color:#000;transform:scaleX(0.8800);">Wilson</div>
<div class="t" style="left:291.76px;top:702.74px;font-size:12px;color:#000;transform:scaleX(0.8800);">38.4615</div>
<div class="t" style="left:45.93px;top:721.74px;font-size:12px;color:#000;transform:scaleX(0.8800);">10</div>
<div class="t" style="left:78.73px;top:721.74px;font-size:12px;color:#000;transform:scaleX(0.8800);">10</div>
<div class="t" style="left:107.51px;top:721.74px;font-size:12px;color:#000;transform:scaleX(0.8800);">Information Services</div>
<div class="t" style="left:219.45px;top:721.74px;font-size:12px;color:#000;transform:scaleX(0.8800);">Connelly</div>
<div class="t" style="left:291.76px;top:721.74px;font-size:12px;color:#000;transform:scaleX(0.8800);">32.4519</div>
<div class="t" style="left:45.93px;top:740.74px;font-size:12px;color:#000;transform:scaleX(0.8800);">11</div>
<div class="t" style="left:78.73px;top:740.74px;font-size:12px;color:#000;transform:scaleX(0.8800);">11</div>
<div class="t" style="left:107.51px;top:740.74px;font-size:12px;color:#000;transform:scaleX(0.8800);">Information Services</div>
<div class="t" style="left:219.12px;top:740.74px;font-size:12px;color:#000;transform:scaleX(0.8800);">Meyyappan</div>
<div class="t" style="left:291.76px;top:740.74px;font-size:12px;color:#000;transform:scaleX(0.8800);">32.4519</div>
<div class="a" style="left:35px;top:796px;width:677px;height:26px;background:linear-gradient(#f0e68c 0,#f0e68c 20px,#fbe6a8 20px);border-radius:0 0 2px 2px"></div>
<svg style="left:38px;top:798px" width="17" height="17" viewBox="0 0 17 17"><circle cx="8.5" cy="8.5" r="8" fill="#3aa53a" stroke="#1f7a1f"/><circle cx="8.5" cy="6" r="6" fill="#7fd07f" opacity="0.5"/><path d="M4 9L7.5 12.5L13 5" stroke="#fff" stroke-width="2.2" fill="none"/></svg>
<div class="t" style="left:58.33px;top:800.84px;font-size:12px;color:#000;transform:scaleX(0.9311);">Query  exe...</div>
<div class="t" style="left:134.58px;top:800.84px;font-size:12px;color:#000;transform:scaleX(0.9597);">(LocalDb)\v11.0 (11.0 SP1)</div>
<div class="t" style="left:284.92px;top:800.84px;font-size:12px;color:#000;transform:scaleX(0.9544);">SSW2000\DorbenZhang (54)</div>
<div class="t" style="left:446.30px;top:800.84px;font-size:12px;color:#000;transform:scaleX(1.0069);">aspnet-WebApplication4...</div>
<div class="t" style="left:598.75px;top:800.84px;font-size:12px;color:#000;transform:scaleX(0.9027);">00:00:00</div>
<div class="t" style="left:654.05px;top:800.84px;font-size:12px;color:#000;transform:scaleX(0.9730);">11 rows</div>
<div class="a" style="left:130px;top:799px;width:1px;height:17px;background:#fffbe0;box-shadow:-1px 0 #c9c08a"></div>
<div class="a" style="left:278px;top:799px;width:1px;height:17px;background:#fffbe0;box-shadow:-1px 0 #c9c08a"></div>
<div class="a" style="left:441px;top:799px;width:1px;height:17px;background:#fffbe0;box-shadow:-1px 0 #c9c08a"></div>
<div class="a" style="left:595px;top:799px;width:1px;height:17px;background:#fffbe0;box-shadow:-1px 0 #c9c08a"></div>
<div class="a" style="left:649px;top:799px;width:1px;height:17px;background:#fffbe0;box-shadow:-1px 0 #c9c08a"></div>
<div class="t" style="left:11.05px;top:833.84px;font-size:12px;color:#fff;transform:scaleX(0.9541);">Ready</div>
<div class="t" style="left:367.44px;top:833.84px;font-size:12px;color:#fff;transform:scaleX(0.9572);">Ln 20</div>
<div class="t" style="left:459.79px;top:833.84px;font-size:12px;color:#fff;transform:scaleX(0.9719);">Col 24</div>
<div class="t" style="left:551.92px;top:833.84px;font-size:12px;color:#fff;transform:scaleX(0.9349);">Ch 24</div>
<div class="t" style="left:686.90px;top:833.84px;font-size:12px;color:#fff;transform:scaleX(0.9741);">INS</div>
<svg style="left:726px;top:838px" width="11" height="11" viewBox="0 0 11 11"><g fill="#e8ecf4"><rect x="8" y="0" width="2" height="2"/><rect x="5" y="3" width="2" height="2"/><rect x="8" y="3" width="2" height="2"/><rect x="2" y="6" width="2" height="2"/><rect x="5" y="6" width="2" height="2"/><rect x="8" y="6" width="2" height="2"/><rect x="-1" y="9" width="2" height="2"/><rect x="2" y="9" width="2" height="2"/><rect x="5" y="9" width="2" height="2"/><rect x="8" y="9" width="2" height="2"/></g></svg>
</body></html>
